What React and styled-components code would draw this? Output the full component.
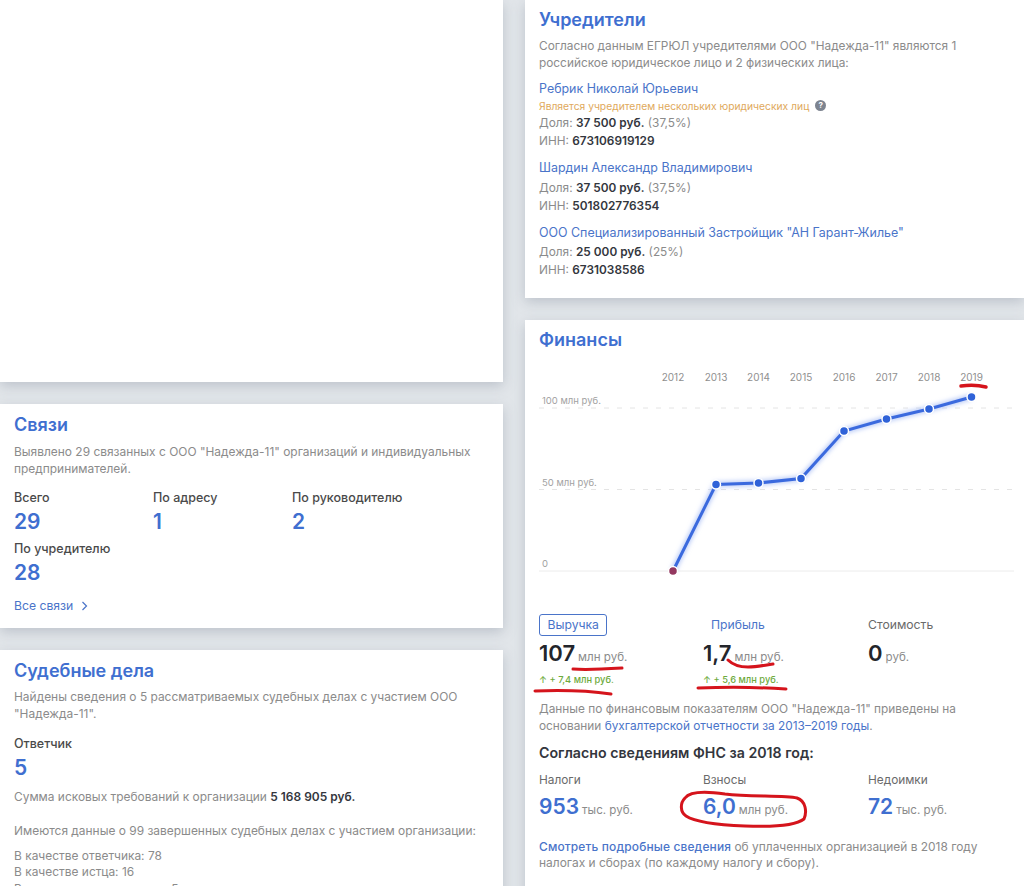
import React from 'react';
import styled, { createGlobalStyle } from 'styled-components';

const GlobalStyle = createGlobalStyle`
    html, body {
        margin: 0;
        padding: 0;
        background: #e2e6ea;
    }
    body {
        font-family: Inter, "Noto Sans", sans-serif;
        font-size: 11.85px;
        line-height: 16.5px;
        color: #8b8b8b;
    }
`;

const years = [2012, 2013, 2014, 2015, 2016, 2017, 2018, 2019];
const points = [
    [134, 206], [177, 119.5], [219.5, 118], [262, 113.5],
    [305, 66], [347.5, 54], [390, 44], [432.5, 32],
];

function Chart() {
    const line = points.map((p) => p.join(',')).join(' ');
    return (
        <ChartSvg width="475" height="226" viewBox="0 0 475 226">
            <defs>
                <filter id="glow" x="-10%" y="-10%" width="120%" height="120%">
                    <feGaussianBlur stdDeviation="2" />
                </filter>
            </defs>
            {years.map((y, i) => (
                <text key={y} x={points[i][0]} y="16" textAnchor="middle" fontSize="10" fill="#8f8f8f">{y}</text>
            ))}
            <text x="3" y="39" fontSize="9.5" fill="#a2a2a2">100 млн руб.</text>
            <text x="3" y="121" fontSize="9.5" fill="#a2a2a2">50 млн руб.</text>
            <text x="3" y="202" fontSize="9.5" fill="#a2a2a2">0</text>
            <line x1="0" x2="475" y1="43" y2="43" stroke="#e4e4e4" strokeDasharray="5 8" />
            <line x1="0" x2="475" y1="124.5" y2="124.5" stroke="#e4e4e4" strokeDasharray="5 8" />
            <line x1="0" x2="475" y1="206" y2="206" stroke="#ececec" />
            <polyline points={line} fill="none" stroke="#a9bff5" strokeOpacity="0.75" strokeWidth="6" filter="url(#glow)" />
            <polyline points={line} fill="none" stroke="#3b6ade" strokeWidth="3" />
            {points.map((p, i) => (
                <circle
                    key={years[i]}
                    cx={p[0]}
                    cy={p[1]}
                    r="4.5"
                    fill={i === 0 ? '#93375f' : '#2f62d8'}
                    stroke="#fff"
                    strokeWidth="1.5"
                />
            ))}
        </ChartSvg>
    );
}

export default function App() {
    return (
        <Page>
            <GlobalStyle />
            <Column $size="11.95px">
                <EmptyCard />
                <Card $height="224px" $top="10px">
                    <Title>Связи</Title>
                    <Text>Выявлено 29 связанных с ООО "Надежда-11" организаций и индивидуальных предпринимателей.</Text>
                    <LinksGrid>
                        <Stat><StatLabel>Всего</StatLabel><StatValue>29</StatValue></Stat>
                        <Stat><StatLabel>По адресу</StatLabel><StatValue>1</StatValue></Stat>
                        <Stat><StatLabel>По руководителю</StatLabel><StatValue>2</StatValue></Stat>
                        <Stat><StatLabel>По учредителю</StatLabel><StatValue>28</StatValue></Stat>
                    </LinksGrid>
                    <AllLinks>
                        Все связи
                        <svg width="7" height="10" viewBox="0 0 7 10" fill="none" stroke="#4a74c9" strokeWidth="1.2">
                            <path d="M1.5 1l4 4-4 4" />
                        </svg>
                    </AllLinks>
                </Card>
                <Card $height="400px" $top="10px">
                    <Title $gap="7px">Судебные дела</Title>
                    <Text>Найдены сведения о 5 рассматриваемых судебных делах с участием ООО "Надежда-11".</Text>
                    <CaseStat>
                        <StatLabel>Ответчик</StatLabel>
                        <StatValue>5</StatValue>
                    </CaseStat>
                    <Text>Сумма исковых требований к организации <Strong>5 168 905 руб.</Strong></Text>
                    <CaseSummary>Имеются данные о 99 завершенных судебных делах с участием организации:</CaseSummary>
                    <CaseList>
                        <div>В качестве ответчика: 78</div>
                        <div>В качестве истца: 16</div>
                        <div>В качестве третьего лица: 5</div>
                    </CaseList>
                </Card>
            </Column>
            <Column>
                <Card $height="298px" $top="9px">
                    <Title $gap="7px">Учредители</Title>
                    <Text>Согласно данным ЕГРЮЛ учредителями ООО "Надежда-11" являются 1 российское юридическое лицо и 2 физических лица:</Text>
                    <Founder>
                        <FounderName>Ребрик Николай Юрьевич</FounderName>
                        <FounderNote>
                            Является учредителем нескольких юридических лиц
                            <HelpDot>?</HelpDot>
                        </FounderNote>
                        <FounderRow>Доля: <Strong>37 500 руб.</Strong> (37,5%)</FounderRow>
                        <FounderRow>ИНН: <Strong>673106919129</Strong></FounderRow>
                    </Founder>
                    <Founder>
                        <FounderName $spaced>Шардин Александр Владимирович</FounderName>
                        <FounderRow>Доля: <Strong>37 500 руб.</Strong> (37,5%)</FounderRow>
                        <FounderRow>ИНН: <Strong>501802776354</Strong></FounderRow>
                    </Founder>
                    <Founder>
                        <FounderName $spaced>ООО Специализированный Застройщик "АН Гарант-Жилье"</FounderName>
                        <FounderRow>Доля: <Strong>25 000 руб.</Strong> (25%)</FounderRow>
                        <FounderRow>ИНН: <Strong>6731038586</Strong></FounderRow>
                    </Founder>
                </Card>
                <Card $height="600px" $top="9px">
                    <Title>Финансы</Title>
                    <Chart />
                    <Metrics>
                        <Metric>
                            <TabActive>Выручка</TabActive>
                            <MetricValue>107<Unit>млн руб.</Unit></MetricValue>
                            <Delta>↑&nbsp;+ 7,4 млн руб.</Delta>
                        </Metric>
                        <Metric>
                            <Tab $indent="8px">Прибыль</Tab>
                            <MetricValue>1,7<Unit>млн руб.</Unit></MetricValue>
                            <Delta>↑&nbsp;+ 5,6 млн руб.</Delta>
                        </Metric>
                        <Metric>
                            <Tab $muted>Стоимость</Tab>
                            <MetricValue>0<Unit>руб.</Unit></MetricValue>
                        </Metric>
                    </Metrics>
                    <FinanceNote>
                        Данные по финансовым показателям ООО "Надежда-11" приведены на основании <BlueLink>бухгалтерской отчетности за 2013–2019 годы</BlueLink>.
                    </FinanceNote>
                    <TaxHeading>Согласно сведениям ФНС за 2018 год:</TaxHeading>
                    <Taxes>
                        <div><TaxLabel>Налоги</TaxLabel><TaxValue>953<Unit>тыс. руб.</Unit></TaxValue></div>
                        <div><TaxLabel>Взносы</TaxLabel><TaxValue>6,0<Unit>млн руб.</Unit></TaxValue></div>
                        <div><TaxLabel>Недоимки</TaxLabel><TaxValue>72<Unit>тыс. руб.</Unit></TaxValue></div>
                    </Taxes>
                    <TaxNote>
                        <StrongLink>Смотреть подробные сведения</StrongLink> об уплаченных организацией в 2018 году налогах и сборах (по каждому налогу и сбору).
                    </TaxNote>
                </Card>
            </Column>
            <Marks width="1024" height="886" viewBox="0 0 1024 886" fill="none" stroke="#d5141c" strokeLinecap="round">
                <path d="M961 386c8-1 17-1 25 1" strokeWidth="3.5" />
                <path d="M573 669c12 1 33 0 49-1" strokeWidth="3" />
                <path d="M535 691c25-1 55 0 76 3" strokeWidth="3" />
                <path d="M728 660c5 5 12 7 20 7 9 0 17-2 25-3" strokeWidth="3" />
                <path d="M698 688c28-1 58-1 88 1" strokeWidth="3" />
                <path d="M685 798C690 791 705 791 725 794C750 797 785 795 797 798C806 801 807 812 804 819C795 826 770 827 745 826C720 825 695 822 686 816C680 812 680 803 685 798z" strokeWidth="3" />
            </Marks>
        </Page>
    );
}

const Page = styled.div`
    position: relative;
    display: grid;
    grid-template-columns: 503px 499px;
    column-gap: 22px;
    width: 1024px;
    height: 886px;
    overflow: hidden;
`;

const Column = styled.div`
    display: flex;
    flex-direction: column;
    gap: 22px;
    font-size: ${(p) => p.$size || '11.85px'};
`;

const Card = styled.section`
    box-sizing: border-box;
    flex: none;
    height: ${(p) => p.$height || 'auto'};
    padding: ${(p) => p.$top || '10px'} 14px 0;
    background: #fff;
    box-shadow: 0 4px 12px rgba(120, 130, 145, 0.35);
`;

const EmptyCard = styled(Card)`
    height: 382px;
`;

const Title = styled.h2`
    margin: 0 0 ${(p) => p.$gap || '8px'};
    font-size: 18px;
    line-height: 22px;
    font-weight: 600;
    color: #3f6fd0;
`;

const Text = styled.div`
    color: #8b8b8b;
`;

const Strong = styled.b`
    font-weight: 600;
    color: #33363d;
`;

const LinksGrid = styled.div`
    display: grid;
    grid-template-columns: repeat(3, 139px);
    row-gap: 4px;
    margin-top: 13px;
`;

const Stat = styled.div`
    min-height: 47px;
`;

const StatLabel = styled.div`
    font-size: 12.5px;
    font-weight: 500;
    color: #4a4a4a;
`;

const StatValue = styled.div`
    font-size: 21px;
    line-height: 30px;
    font-weight: 600;
    color: #3f6fd0;
`;

const AllLinks = styled.div`
    display: flex;
    align-items: center;
    gap: 8px;
    margin-top: 10px;
    font-size: 12.2px;
    color: #4a74c9;
`;

const CaseStat = styled.div`
    margin: 14px 0 6px;
`;

const CaseSummary = styled(Text)`
    margin-top: 18px;
`;

const CaseList = styled(Text)`
    margin-top: 8px;
`;

const Founder = styled.div`
    margin-top: 10px;
`;

const FounderName = styled.div`
    font-size: 12.45px;
    color: #4a74c9;
    margin-bottom: ${(p) => (p.$spaced ? '2px' : '0')};
`;

const FounderNote = styled.div`
    display: flex;
    align-items: center;
    gap: 6px;
    font-size: 10.3px;
    color: #e0a95c;
`;

const HelpDot = styled.span`
    display: inline-flex;
    align-items: center;
    justify-content: center;
    width: 11px;
    height: 11px;
    border-radius: 50%;
    background: #7d8490;
    color: #fff;
    font-size: 8px;
    line-height: 11px;
    font-weight: 700;
`;

const FounderRow = styled.div`
    line-height: 18px;
`;

const ChartSvg = styled.svg`
    display: block;
    margin-top: 14px;
`;

const Metrics = styled.div`
    display: grid;
    grid-template-columns: 164px 165px 1fr;
    margin-top: 23px;
    height: 85px;
`;

const Metric = styled.div`
    display: flex;
    flex-direction: column;
    align-items: flex-start;
`;

const Tab = styled.div`
    box-sizing: border-box;
    height: 22px;
    margin-left: ${(p) => p.$indent || '0'};
    font-size: 12.2px;
    line-height: 22px;
    color: ${(p) => (p.$muted ? '#6a6a6a' : '#4a74c9')};
`;

const TabActive = styled(Tab)`
    padding: 0 7.5px;
    border: 1px solid #4a74c9;
    border-radius: 3px;
    line-height: 20px;
`;

const MetricValue = styled.div`
    margin-top: 5px;
    font-size: 22px;
    line-height: 24px;
    font-weight: 600;
    color: #23252b;
`;

const Unit = styled.span`
    margin-left: 3px;
    font-size: 11.6px;
    font-weight: 400;
    color: #8b8b8b;
`;

const Delta = styled.div`
    margin-top: 4px;
    font-size: 9.3px;
    line-height: 14px;
    font-weight: 500;
    color: #6eaa3c;
`;

const FinanceNote = styled(Text)`
    margin-top: 2px;
`;

const BlueLink = styled.span`
    color: #4a74c9;
`;

const StrongLink = styled(BlueLink)`
    font-weight: 500;
    letter-spacing: 0.15px;
`;

const TaxHeading = styled.div`
    margin-top: 10px;
    font-size: 14.2px;
    line-height: 17px;
    font-weight: 600;
    color: #33363d;
`;

const Taxes = styled.div`
    display: grid;
    grid-template-columns: 164px 165px 1fr;
    margin-top: 11px;
`;

const TaxLabel = styled.div`
    color: #6a6a6a;
`;

const TaxValue = styled.div`
    margin-top: 3px;
    font-size: 21px;
    line-height: 30px;
    font-weight: 600;
    color: #3f6fd0;
`;

const TaxNote = styled(Text)`
    margin-top: 14px;
    font-size: 11.95px;
`;

const Marks = styled.svg`
    position: absolute;
    left: 0;
    top: 0;
    pointer-events: none;
`;
